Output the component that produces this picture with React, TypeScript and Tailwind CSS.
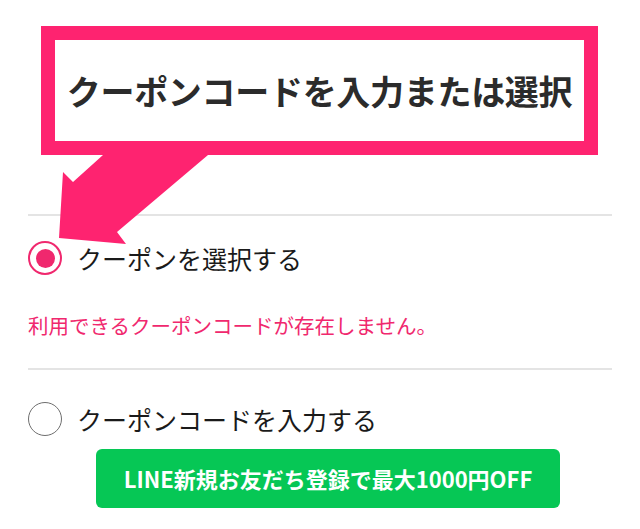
const FONT = "font-['Noto_Sans_CJK_JP','Noto_Sans',sans-serif]";

function Radio({ checked }: { checked?: boolean }) {
  return checked ? (
    <span className="flex h-[34px] w-[34px] shrink-0 items-center justify-center rounded-full border-2 border-[#f0286e]">
      <span className="h-[19px] w-[19px] rounded-full bg-[#f0286e]" />
    </span>
  ) : (
    <span className="h-[34px] w-[34px] shrink-0 rounded-full border-[1.5px] border-[#6e6e6e]" />
  );
}

export default function App() {
  return (
    <div className={`relative h-[529px] w-[640px] overflow-hidden bg-white ${FONT}`}>
      {/* Annotation box */}
      <div className="pl-[41px] pt-[26px]">
        <div className="flex h-[129px] w-[557px] items-center justify-center border-[14px] border-[#fe2370] bg-white">
          <h1 className="text-[34px] font-bold leading-none tracking-[-0.3px] text-[#2b2b2b]">
            クーポンコードを入力または選択
          </h1>
        </div>
      </div>

      {/* Coupon section */}
      <div className="mx-[28px] mt-[59px] border-t-2 border-[#e4e4e4] pt-[25px]">
        <label className="flex items-center gap-[15px]">
          <Radio checked />
          <span className="text-[25px] leading-[34px] text-[#1a1a1a]">クーポンを選択する</span>
        </label>
        <p className="mt-[36px] text-[20.5px] leading-[28px] text-[#f0286e]">
          利用できるクーポンコードが存在しません。
        </p>
      </div>

      <div className="mx-[28px] mt-[29px] border-t-2 border-[#e4e4e4] pt-[32px]">
        <label className="flex items-center gap-[15px]">
          <Radio />
          <span className="text-[25px] leading-[34px] text-[#1a1a1a]">クーポンコードを入力する</span>
        </label>
        <button className="ml-[68px] mt-[13px] flex h-[59px] w-[464px] items-center justify-center rounded-[6px] bg-[#06c755] text-[22px] font-bold text-white">
          LINE新規お友だち登録で最大1000円OFF
        </button>
      </div>

      {/* Annotation arrow */}
      <svg className="pointer-events-none absolute left-0 top-0" width="640" height="529" viewBox="0 0 640 529">
        <polygon
          points="106,150 103,155 73,182 63,172 59,238 126,244 117,232 208,155 212,150"
          fill="#fe2370"
        />
      </svg>
    </div>
  );
}
